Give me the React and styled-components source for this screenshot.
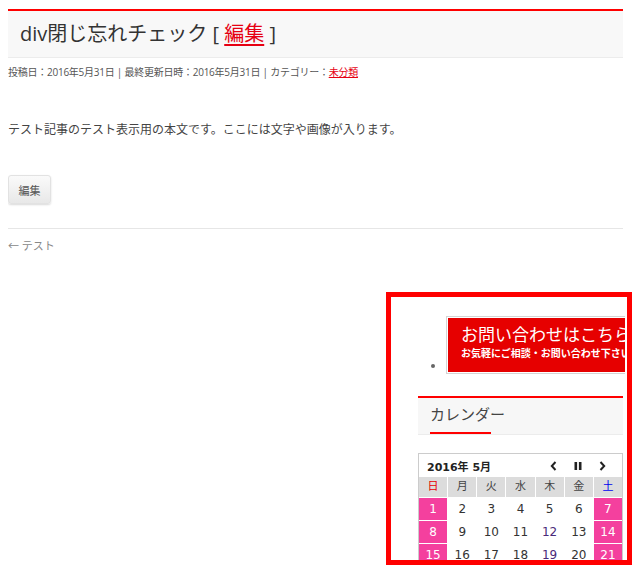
import React from 'react'
import styled, { createGlobalStyle } from 'styled-components'

const Global = createGlobalStyle`
  body {
    margin: 8px;
    font-family: "Open Sans", "Noto Sans CJK JP", sans-serif;
    color: #333;
    background: #fff;
  }
`

const Article = styled.article`
  width: 615px;
`

const TitleBox = styled.header`
  margin-top: 1px;
  height: 46px;
  border-top: 2px solid #ff0000;
  border-bottom: 1px solid #ececec;
  background: #f8f8f8;
  padding-left: 12px;
  h1 {
    margin: 0;
    font-size: 20px;
    line-height: 46px;
    font-weight: normal;
    color: #333;
  }
  a {
    color: #e60012;
    text-decoration: underline;
    text-underline-offset: 3px;
  }
`

const Meta = styled.div`
  margin-top: 7px;
  font-size: 10px;
  line-height: 14px;
  letter-spacing: -0.25px;
  color: #555;
  a {
    color: #e60012;
    text-decoration: underline;
  }
`

const Body = styled.p`
  margin: 42px 0 0;
  font-size: 12px;
  line-height: 18px;
  color: #444;
`

const EditButton = styled.button`
  display: block;
  margin-top: 36px;
  width: 43px;
  height: 29px;
  padding: 0;
  border: 1px solid #e2e2e2;
  border-radius: 3px;
  background: linear-gradient(#fafafa, #e8e8e8);
  box-shadow: 0 1px 2px rgba(0, 0, 0, 0.15);
  font-family: "Noto Sans CJK JP", sans-serif;
  font-size: 11px;
  color: #555;
`

const Rule = styled.hr`
  margin: 24px 0 0;
  border: 0;
  border-top: 1px solid #e6e6e6;
`

const PostNav = styled.div`
  margin-top: 9px;
  font-size: 11px;
  line-height: 16px;
  color: #888;
`

const Frame = styled.aside`
  margin: 38px 0 0 378px;
  width: 236px;
  height: 244px;
  border: 5px solid #ff0000;
  overflow: hidden;
  padding-top: 19px;
  box-sizing: content-box;
`

const Inner = styled.div`
  margin-left: 27px;
  width: 205px;
`

const BannerList = styled.ul`
  margin: 0;
  padding-left: 28px;
  list-style: disc;
  color: #666;
  font-size: 11px;
  li { line-height: 0; }
`

const BannerClip = styled.span`
  display: inline-block;
  width: 179px;
  height: 58px;
  overflow: hidden;
  vertical-align: -4px;
`

const Banner = styled.div`
  width: 220px;
  height: 54px;
  border: 1px solid #d4d4d4;
  padding: 1px;
  background: #fff;
  div.red {
    height: 100%;
    background: #e60000;
    color: #fff;
    padding: 6px 0 0 13px;
    box-sizing: border-box;
    white-space: nowrap;
  }
  .big {
    font-size: 17px;
    line-height: 22px;
  }
  .small {
    font-size: 10px;
    line-height: 14px;
    font-weight: bold;
  }
`

const Widget = styled.section`
  margin-top: 22px;
`

const WidgetTitle = styled.div`
  height: 36px;
  border-top: 2px solid #ff0000;
  border-bottom: 1px solid #ececec;
  background: #f7f7f7;
  padding-left: 12px;
  display: flex;
  flex-direction: column;
  justify-content: flex-end;
  span {
    font-size: 15px;
    line-height: 20px;
    color: #444;
    margin-bottom: 8px;
  }
  i {
    display: block;
    width: 61px;
    height: 2px;
    background: #ff0000;
  }
`

const Calendar = styled.div`
  margin-top: 18px;
  border: 1px solid #ccc;
  width: 203px;
  font-family: "DejaVu Sans", "Noto Sans CJK JP", sans-serif;
`

const CalHead = styled.div`
  height: 23px;
  display: flex;
  align-items: center;
  padding: 0 16px 0 8px;
  gap: 17px;
  b {
    font-size: 11px;
    flex: 1;
    color: #222;
  }
  svg {
    display: block;
  }
`

const Grid = styled.div`
  display: grid;
  grid-template-columns: repeat(7, 1fr);
  column-gap: 1px;
  row-gap: 1px;
`

const Cell = styled.div`
  height: ${(p) => (p.$head ? '20px' : '22px')};
  line-height: ${(p) => (p.$head ? '20px' : '22px')};
  text-align: center;
  font-size: ${(p) => (p.$head ? '11px' : '12px')};
  background: ${(p) => (p.$head ? '#dcdcdc' : p.$weekend ? '#f4409e' : '#fff')};
  color: ${(p) => p.$color || (p.$weekend && !p.$head ? '#fff' : '#333')};
`

const Prev = () => (
  <svg width="7" height="10" viewBox="0 0 7 10">
    <path d="M5.5 1 L1.8 5 L5.5 9" fill="none" stroke="#222" strokeWidth="2" />
  </svg>
)

const Pause = () => (
  <svg width="8" height="8" viewBox="0 0 8 8">
    <rect x="0.5" y="0" width="2.6" height="8" fill="#222" />
    <rect x="4.9" y="0" width="2.6" height="8" fill="#222" />
  </svg>
)

const Next = () => (
  <svg width="7" height="10" viewBox="0 0 7 10">
    <path d="M1.5 1 L5.2 5 L1.5 9" fill="none" stroke="#222" strokeWidth="2" />
  </svg>
)

const days = [
  { t: '日', c: '#e60000' },
  { t: '月' },
  { t: '火' },
  { t: '水' },
  { t: '木' },
  { t: '金' },
  { t: '土', c: '#0000ee' },
]

const weeks = [
  [1, 2, 3, 4, 5, 6, 7],
  [8, 9, 10, 11, 12, 13, 14],
  [15, 16, 17, 18, 19, 20, 21],
  [22, 23, 24, 25, 26, 27, 28],
]

const App = () => {
  return (
    <>
      <Global />
      <Article>
        <TitleBox>
          <h1>
            div閉じ忘れチェック [ <a href="#">編集</a> ]
          </h1>
        </TitleBox>
        <Meta>
          投稿日：2016年5月31日 | 最終更新日時：2016年5月31日 | カテゴリー：<a href="#">未分類</a>
        </Meta>
        <Body>テスト記事のテスト表示用の本文です。ここには文字や画像が入ります。</Body>
        <EditButton>編集</EditButton>
        <Rule />
        <PostNav>← テスト</PostNav>
      </Article>

      <Frame>
        <Inner>
          <BannerList>
            <li>
              <BannerClip>
                <Banner>
                  <div className="red">
                    <div className="big">お問い合わせはこちら</div>
                    <div className="small">お気軽にご相談・お問い合わせ下さい</div>
                  </div>
                </Banner>
              </BannerClip>
            </li>
          </BannerList>

          <Widget>
            <WidgetTitle>
              <span>カレンダー</span>
              <i />
            </WidgetTitle>
            <Calendar>
              <CalHead>
                <b>2016年 5月</b>
                <Prev />
                <Pause />
                <Next />
              </CalHead>
              <Grid>
                {days.map((d) => (
                  <Cell key={d.t} $head $color={d.c || '#444'}>
                    {d.t}
                  </Cell>
                ))}
                {weeks.flat().map((n, i) => (
                  <Cell
                    key={n}
                    $weekend={i % 7 === 0 || i % 7 === 6}
                    $color={n === 12 || n === 19 ? '#4a2a7a' : undefined}
                  >
                    {n}
                  </Cell>
                ))}
              </Grid>
            </Calendar>
          </Widget>
        </Inner>
      </Frame>
    </>
  )
}

export default App
